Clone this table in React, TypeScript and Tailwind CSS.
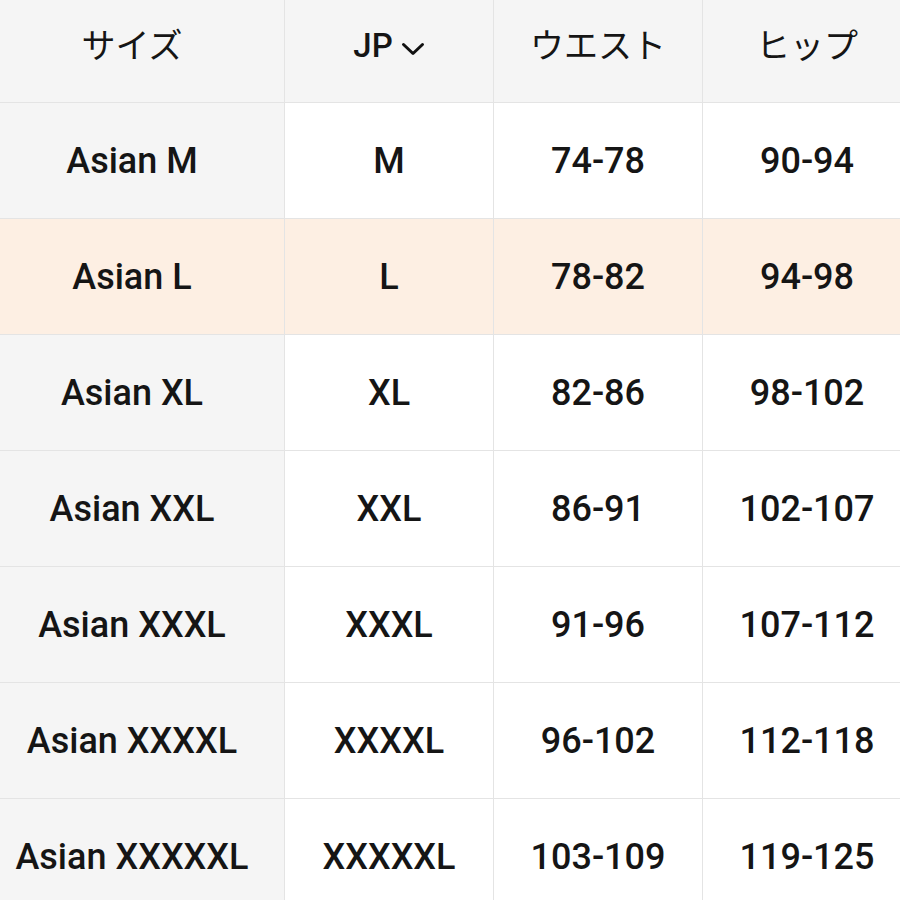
const rows = [
  ["Asian M", "M", "74-78", "90-94"],
  ["Asian L", "L", "78-82", "94-98"],
  ["Asian XL", "XL", "82-86", "98-102"],
  ["Asian XXL", "XXL", "86-91", "102-107"],
  ["Asian XXXL", "XXXL", "91-96", "107-112"],
  ["Asian XXXXL", "XXXXL", "96-102", "112-118"],
  ["Asian XXXXXL", "XXXXXL", "103-109", "119-125"],
]

const highlighted = 1

function Chevron() {
  return (
    <svg width="24" height="14" viewBox="0 0 24 14" className="ml-[8px] mt-[21px]">
      <path d="M2.5 2.5 L12 11.5 L21.5 2.5" fill="none" stroke="#111" strokeWidth="3" strokeLinecap="round" strokeLinejoin="round" />
    </svg>
  )
}

export default function App() {
  return (
    <div className="h-[900px] w-[900px] overflow-hidden bg-white text-[#151515] [font-family:Roboto,'Noto_Sans_CJK_JP',sans-serif]">
      <div className="grid w-[911px] grid-cols-[284px_209px_209px_209px]">
        {/* Header */}
        <div className="flex h-[103px] items-start justify-center border-b border-[#e4e4e4] bg-[#f5f5f5] pr-5 pt-[18px] text-[34px] font-normal [font-family:'Noto_Sans_CJK_JP',sans-serif]">
          サイズ
        </div>
        <div className="flex h-[103px] items-start justify-center border-b border-l border-[#e4e4e4] bg-[#f5f5f5] pt-[21px] text-[33px] font-medium">
          <span>JP</span>
          <Chevron />
        </div>
        <div className="flex h-[103px] items-start justify-center border-b border-l border-[#e4e4e4] bg-[#f5f5f5] pt-[18px] text-[34px] font-normal [font-family:'Noto_Sans_CJK_JP',sans-serif]">
          ウエスト
        </div>
        <div className="flex h-[103px] items-start justify-center border-b border-l border-[#e4e4e4] bg-[#f5f5f5] pt-[18px] text-[34px] font-normal [font-family:'Noto_Sans_CJK_JP',sans-serif]">
          ヒップ
        </div>

        {/* Rows */}
        {rows.map((r, i) => {
          const hl = i === highlighted
          return r.map((cell, j) => (
            <div
              key={i + "-" + j}
              className={
                "flex h-[116px] items-center justify-center border-b border-[#e4e4e4] text-[36px] font-medium " +
                (j > 0 ? "border-l " : "pr-5 ") +
                (hl ? "bg-[#fdefe3]" : j === 0 ? "bg-[#f5f5f5]" : "bg-white")
              }
            >
              {cell}
            </div>
          ))
        })}
      </div>
    </div>
  )
}
